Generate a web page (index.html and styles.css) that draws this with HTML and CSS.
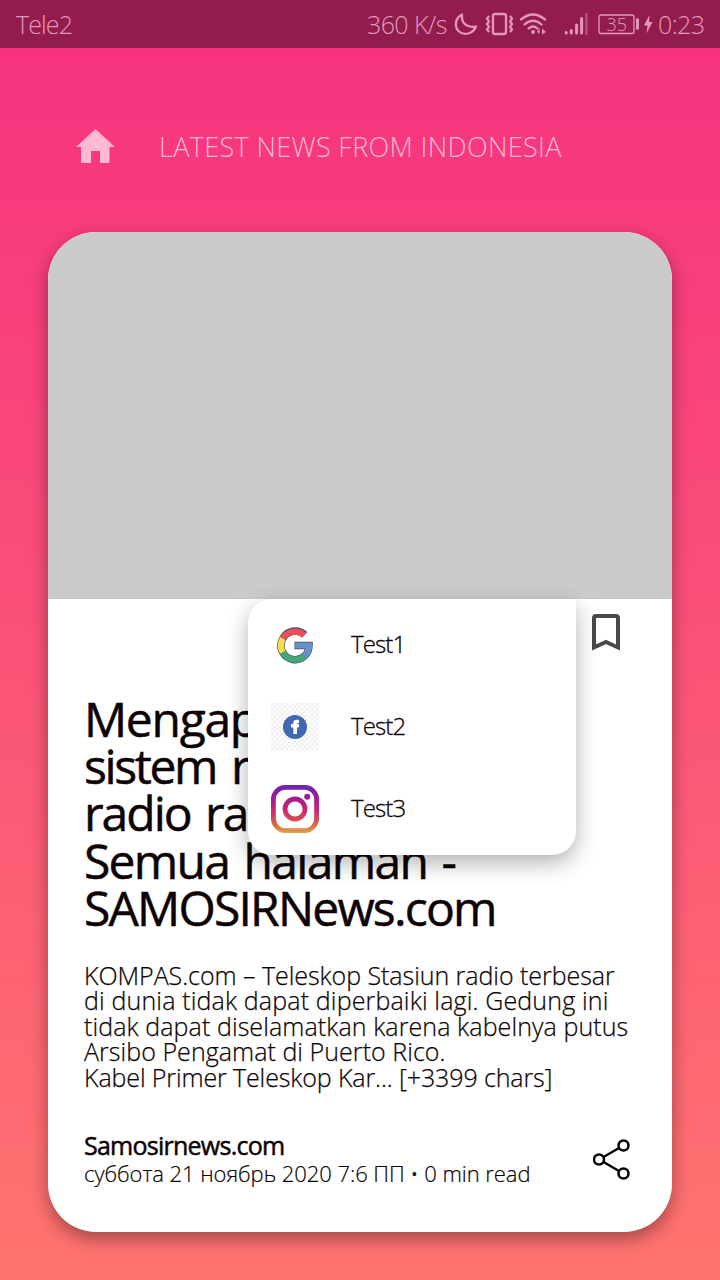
FILE: index.html
```html
<!DOCTYPE html>
<html lang="id">
<head>
<meta charset="utf-8">
<title>Latest news</title>
<link rel="stylesheet" href="styles.css">
</head>
<body>
<div class="screen">
  <header class="status">
    <span class="carrier">Tele2</span>
    <span class="speed">360 K/s</span>
    <svg class="status-icons" width="207" height="48" viewBox="450 0 207 48" fill="none" stroke="#e596be" stroke-width="2">
      <path d="M462 14.500C455 18 454 27 459 31.500C464 36 473 34 476 26.500C467 28.500 461 23 462 14.500Z" stroke-width="2.300" stroke-linejoin="round"/>
      <rect x="493" y="14" width="13" height="20" rx="2" stroke-width="2.300"/>
      <path d="M489 16l-2 2.700 2 2.700-2 2.700 2 2.700-2 2.700 2 2.500M510 16l2 2.700-2 2.700 2 2.700-2 2.700 2 2.700-2 2.500" stroke-width="2.200"/>
      <path d="M521 19.500Q533 9.500 545 19.500M524.500 24.500Q533 17 541.500 24.500M528.500 28.500Q533 24.500 537.500 28.500" stroke-width="2.300" stroke-linecap="round"/>
      <circle cx="533" cy="32" r="2" fill="#e596be" stroke="none"/>
      <path d="M537 32l2.500-4v6zM546 32l-4-3.500v6z" fill="#e596be" stroke="none"/>
      <path d="M566.200 32.500v.5M571.300 30.500v2.500M576.600 25v8M581.600 18.500v14.500" stroke-width="3" stroke-linecap="round"/>
      <path d="M586.500 13v22" stroke="#b54b7e" stroke-width="2.500"/>
      <rect x="599" y="15" width="35" height="18.500" rx="2" stroke-width="1.300"/>
      <path d="M637.500 18.500v11" stroke-width="3"/>
      <path d="M649.500 15L644 25.500h3.500l-1 8 6-11.500h-3.500z" fill="#e596be" stroke="none"/>
      <text class="battery" x="606.500" y="31">35</text>
    </svg>
    <span class="clock">0:23</span>
  </header>

  <nav class="heading">
    <svg class="home" width="40" height="34" viewBox="0 0 40 34" fill="#ffb9d5"><path d="M19.500 0L39 18H33.500V34H24V22H15V34H5V18H0z"/></svg>
    <h1 class="heading-text">LATEST NEWS FROM INDONESIA</h1>
  </nav>

  <main class="card">
    <div class="photo"></div>
    <div class="actions">
      <svg width="28" height="37" viewBox="0 0 28 37" fill="none" stroke="#494949" stroke-width="4"><path d="M2 33.500V4Q2 2 4 2H24Q26 2 26 4V33.500L14 28z"/></svg>
    </div>
    <h2 class="title">
      <span class="t1">Mengapa</span>
      <span class="t2">sistem robot</span>
      <span class="t3">radio raksasa</span>
      <span class="t4">Semua halaman -</span>
      <span class="t5">SAMOSIRNews.com</span>
    </h2>
    <p class="summary">
      <span class="s1">KOMPAS.com – Teleskop Stasiun radio terbesar</span>
      <span class="s2">di dunia tidak dapat diperbaiki lagi. Gedung ini</span>
      <span class="s3">tidak dapat diselamatkan karena kabelnya putus</span>
      <span class="s4">Arsibo Pengamat di Puerto Rico.</span>
      <span class="s5">Kabel Primer Teleskop Kar... [+3399 chars]</span>
    </p>
    <footer class="foot">
      <div class="meta">
        <div class="source">Samosirnews.com</div>
        <div class="date">суббота 21 ноябрь 2020 7:6 ПП • 0 min read</div>
      </div>
      <svg class="share" width="38" height="42" viewBox="0 0 38 42" fill="none" stroke="#000" stroke-width="2.500"><circle cx="6" cy="20.500" r="5"/><circle cx="30.500" cy="6.500" r="5"/><circle cx="30.500" cy="34.500" r="5"/><path d="M10.500 18L26 9M10.500 23L26 32"/></svg>
    </footer>
    <div class="menu">
      <div class="item">
        <svg width="48" height="48" viewBox="0 0 48 48">
          <g fill="none" stroke="#46505f" stroke-width="7.500"><path d="M33.800 13.700A14.100 14.100 0 0 0 11.800 17.500M11.800 17.500A14.100 14.100 0 0 0 11.800 31.500M11.800 31.500A14.100 14.100 0 0 0 33.500 35"/><path d="M23.500 24.500H38Q38 31 33.500 35"/></g>
          <g fill="none" stroke-width="6.200">
            <path d="M33.300 14.200A14.100 14.100 0 0 0 11.800 17.500" stroke="#e94f5c"/>
            <path d="M11.800 17.500A14.100 14.100 0 0 0 11.800 31.500" stroke="#fadb50"/>
            <path d="M11.800 31.500A14.100 14.100 0 0 0 33.500 35" stroke="#45a878"/>
            <path d="M24.200 24.500H38Q38 31 33.500 35" stroke="#6793ca"/>
          </g>
        </svg>
        <span>Test1</span>
      </div>
      <div class="item">
        <svg width="48" height="48" viewBox="0 0 48 48">
          <defs><pattern id="check" width="5" height="5" patternUnits="userSpaceOnUse"><path d="M0 0h2.500v2.500H0zM2.500 2.500H5V5H2.500z" fill="#efefef"/></pattern></defs>
          <rect width="48" height="48" fill="url(#check)"/>
          <circle cx="24" cy="24" r="12" fill="#4267b2"/>
          <path d="M22.300 31v-6.500H20v-3.500h2.300v-1Q22.300 16.700 26 16.700H28v3.200H27Q26 19.900 26 21h2.200L27.700 24.500H26v6.500z" fill="#fff"/>
        </svg>
        <span>Test2</span>
      </div>
      <div class="item">
        <svg width="48" height="48" viewBox="0 0 48 48" fill="none">
          <defs><linearGradient id="insta" x1="0" y1="0" x2="0" y2="48" gradientUnits="userSpaceOnUse"><stop offset="0" stop-color="#6824b8"/><stop offset=".28" stop-color="#a51b91"/><stop offset=".5" stop-color="#c72572"/><stop offset=".75" stop-color="#d5524f"/><stop offset="1" stop-color="#dfa348"/></linearGradient></defs>
          <rect x="2.400" y="2.400" width="43.200" height="43.200" rx="12" stroke="url(#insta)" stroke-width="4.800"/>
          <circle cx="24" cy="24" r="10" stroke="url(#insta)" stroke-width="4.800"/>
          <circle cx="36.200" cy="11.800" r="3" fill="url(#insta)"/>
        </svg>
        <span>Test3</span>
      </div>
    </div>
  </main>
</div>
</body>
</html>
```
FILE: styles.css
```css
* { box-sizing: border-box; margin: 0; padding: 0; }
body { font-family: "Open Sans", "Noto Sans", sans-serif; }
svg { display: block; flex: none; }
.screen {
  width: 720px;
  height: 1280px;
  overflow: hidden;
  background: linear-gradient(#f63080, #f7387e 12%, #ff746f);
}
.status {
  display: flex;
  align-items: center;
  height: 48px;
  padding: 0 16px;
  background: #921d4c;
  color: #e596be;
  font-size: 25px;
  font-weight: 300;
  line-height: 48px;
  white-space: nowrap;
}
.carrier { flex: none; width: 351px; letter-spacing: -.9px; }
.speed { flex: none; width: 83px; letter-spacing: -.6px; }
.clock { margin-left: 1px; letter-spacing: -.6px; }
.battery { fill: #e596be; stroke: none; font-size: 18px; }
.heading {
  display: flex;
  align-items: center;
  height: 184px;
  padding: 12px 0 0 76px;
}
.heading-text {
  margin-left: 43px;
  color: #ffb9d5;
  font-size: 27px;
  font-weight: 300;
  letter-spacing: .34px;
  white-space: nowrap;
}
.card {
  position: relative;
  width: 624px;
  height: 1000px;
  margin-left: 48px;
  border-radius: 48px;
  background: #fff;
  box-shadow: 0 7px 18px rgba(0, 0, 0, .36);
  color: #0d0305;
}
.photo { height: 367px; border-radius: 48px 48px 0 0; background: #cbcbcb; }
.actions { display: flex; justify-content: flex-end; height: 96px; padding: 15px 52px 0 0; }
.title {
  padding-left: 36px;
  font-size: 48px;
  font-weight: 430;
  line-height: 47.200px;
  -webkit-text-stroke: .5px currentColor;
}
.title span, .summary span { display: block; white-space: nowrap; }
.t1 { letter-spacing: -1.3px; }
.t2 { letter-spacing: -2.400px; word-spacing: 5px; }
.t3 { letter-spacing: -2px; word-spacing: 4px; }
.t4 { letter-spacing: -1.700px; word-spacing: 3.500px; }
.t5 { letter-spacing: -1.800px; }
.summary { padding: 32px 0 0 36px; font-size: 25px; font-weight: 330; line-height: 25.400px; -webkit-text-stroke: .25px currentColor; }
.s1 { letter-spacing: -.05px; }
.s2 { letter-spacing: .15px; }
.s3 { letter-spacing: .09px; }
.s4 { letter-spacing: .05px; }
.s5 { letter-spacing: -.12px; }
.foot { display: flex; justify-content: space-between; padding: 39px 41px 0 36px; white-space: nowrap; }
.source { font-size: 25px; font-weight: 400; line-height: 32px; letter-spacing: -.75px; -webkit-text-stroke: .5px currentColor; }
.date { font-size: 22px; font-weight: 330; line-height: 25px; letter-spacing: -.05px; -webkit-text-stroke: .2px currentColor; }
.share { margin-top: 10px; }
.menu {
  position: absolute;
  left: 200px;
  top: 367px;
  width: 328px;
  height: 256px;
  padding: 5px 22px 5px 22.500px;
  border-radius: 24px 3px 24px 24px;
  background: #fff;
  box-shadow: 0 8px 22px rgba(0, 0, 0, .3);
}
.item { display: flex; align-items: center; height: 82px; gap: 32.500px; font-size: 24px; font-weight: 330; letter-spacing: -.9px; -webkit-text-stroke: .3px currentColor; }
.item span { padding-bottom: 3px; }
```
